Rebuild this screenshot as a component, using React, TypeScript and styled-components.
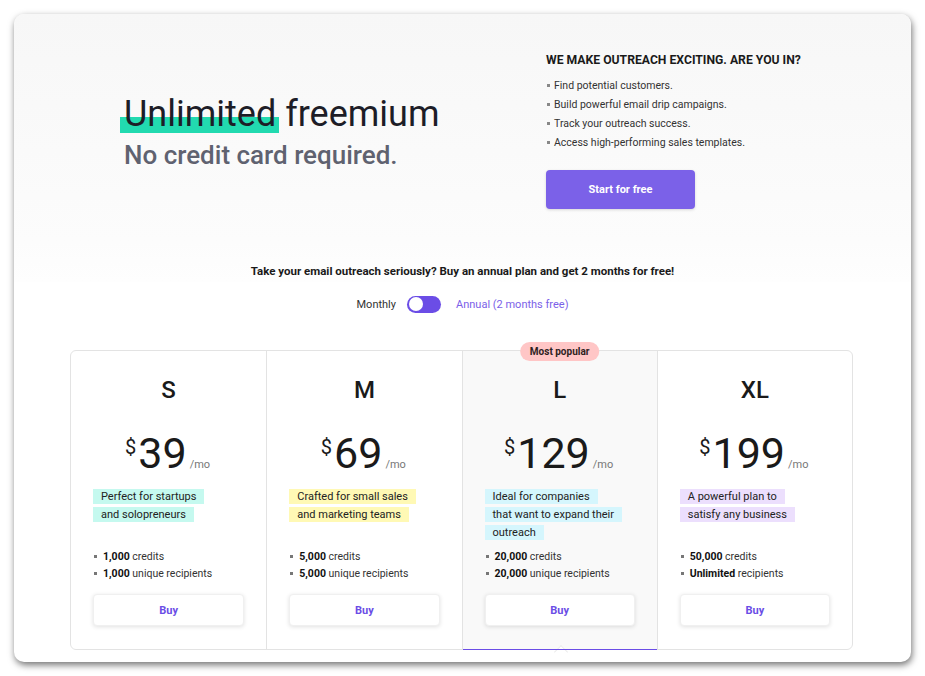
import { FC, useState } from "react";
import styled, { createGlobalStyle } from "styled-components";

const GlobalStyle = createGlobalStyle`
  html, body {
    margin: 0;
    padding: 0;
    background: #fff;
  }
  body {
    font-family: Roboto, "Liberation Sans", Arial, sans-serif;
    color: #222;
  }
  * {
    box-sizing: border-box;
  }
`;

const Page = styled.div`
  width: 925px;
  height: 676px;
  padding: 14px;
`;

const Window = styled.div`
  width: 897px;
  height: 648px;
  border-radius: 10px;
  background: #fff;
  box-shadow: 1px 3px 7px rgba(0, 0, 0, 0.55);
  overflow: hidden;
`;

const Hero = styled.section`
  background: linear-gradient(to bottom, #f7f7f7, #fcfcfc 85%, #fefefe);
  padding: 38px 0 3px;
`;

const HeroRow = styled.div`
  display: flex;
  align-items: center;
  padding-left: 110px;
`;

const HeroLeft = styled.div`
  width: 422px;
`;

const Headline = styled.h1`
  margin: 0;
  font-size: 36px;
  font-weight: 400;
  line-height: 42px;
  color: #1d1d27;
`;

const Marked = styled.span`
  padding: 0 3px 0 4px;
  margin: 0 -3px 0 -4px;
  background: linear-gradient(
    to bottom,
    transparent 58%,
    #22dab0 58%,
    #22dab0 96%,
    transparent 96%
  );
`;

const SubHeadline = styled.h2`
  margin: 6px 0 0;
  font-size: 26px;
  font-weight: 500;
  line-height: 28px;
  color: #5f6270;
`;

const HeroRight = styled.div`
  display: flex;
  flex-direction: column;
  align-items: flex-start;
`;

const Tagline = styled.h3`
  margin: 0;
  font-size: 12.2px;
  font-weight: 700;
  line-height: 16px;
  color: #1a1a1a;
`;

const PerkList = styled.ul`
  list-style: none;
  margin: 8px 0 0;
  padding: 0;
`;

const Perk = styled.li`
  position: relative;
  padding-left: 8px;
  font-size: 10.5px;
  line-height: 19px;
  color: #333;
  &::before {
    content: "";
    position: absolute;
    left: 1px;
    top: 8px;
    width: 3px;
    height: 3px;
    background: #888;
  }
`;

const StartButton = styled.button`
  margin-top: 18px;
  width: 149px;
  height: 39px;
  border: none;
  border-radius: 4px;
  background: #7b61e8;
  color: #fff;
  font-family: inherit;
  font-size: 11px;
  font-weight: 700;
  box-shadow: 0 1px 3px rgba(0, 0, 0, 0.15);
  cursor: pointer;
`;

const Announcement = styled.p`
  margin: 54px 0 0;
  text-align: center;
  font-size: 11.5px;
  font-weight: 700;
  line-height: 16px;
  color: #1a1a1a;
`;

const ToggleRow = styled.div`
  margin-top: 13px;
  display: flex;
  justify-content: center;
  align-items: center;
  height: 18px;
  font-size: 11px;
`;

const ToggleLabel = styled.span<{ $accent?: boolean }>`
  color: ${({ $accent }) => ($accent ? "#7b61e8" : "#333")};
`;

const Switch = styled.button<{ $on: boolean }>`
  position: relative;
  margin: 0 15px 0 11px;
  width: 34px;
  height: 17px;
  padding: 0;
  border: none;
  border-radius: 9px;
  background: #6b4de6;
  cursor: pointer;
  &::after {
    content: "";
    position: absolute;
    top: 1.5px;
    left: ${({ $on }) => ($on ? "1.5px" : "18.5px")};
    width: 14px;
    height: 14px;
    border-radius: 50%;
    background: #fff;
  }
`;

const PlanGrid = styled.div`
  margin: 37px 58px 0 56px;
  display: grid;
  grid-template-columns: repeat(4, 1fr);
  border: 1px solid #e3e3e3;
  border-radius: 6px;
`;

const PlanColumn = styled.div<{ $popular?: boolean }>`
  position: relative;
  display: flex;
  flex-direction: column;
  padding: 25px 22px 23px;
  background: ${({ $popular }) => ($popular ? "#f9f9f9" : "transparent")};
  & + & {
    border-left: 1px solid #e3e3e3;
  }
  ${({ $popular }) =>
    $popular &&
    `
    &::after {
      content: "";
      position: absolute;
      left: 0;
      right: 0;
      bottom: -1px;
      height: 1px;
      background: #6b4de6;
    }
    &::before {
      content: "";
      position: absolute;
      left: 50%;
      bottom: -8px;
      width: 9px;
      height: 9px;
      margin-left: -4px;
      transform: rotate(45deg);
      border-left: 1px solid #ececec;
      border-top: 1px solid #ececec;
      background: #fff;
    }
  `}
`;

const Badge = styled.span`
  position: absolute;
  top: -9px;
  left: 50%;
  transform: translateX(-50%);
  height: 19px;
  padding: 0 10px;
  border-radius: 10px;
  background: #ffc6c6;
  color: #2e2222;
  font-size: 10px;
  font-weight: 700;
  line-height: 19px;
  white-space: nowrap;
`;

const PlanName = styled.h4`
  margin: 0;
  text-align: center;
  font-size: 24px;
  font-weight: 500;
  line-height: 28px;
  color: #1a1a1a;
`;

const PriceRow = styled.div`
  margin-top: 28px;
  display: flex;
  justify-content: center;
  align-items: baseline;
  height: 42px;
`;

const Dollar = styled.span`
  align-self: flex-start;
  margin: 5px 2px 0 -2px;
  font-size: 20px;
  line-height: 20px;
  color: #1a1a1a;
`;

const Amount = styled.span`
  font-size: 43px;
  line-height: 42px;
  color: #1a1a1a;
`;

const Per = styled.span`
  margin-left: 3px;
  font-size: 11px;
  color: #777;
`;

const Description = styled.p`
  margin: 14px 0 6px;
  min-height: 54px;
  font-size: 11px;
  line-height: 18px;
  color: #222;
`;

const Highlight = styled.span<{ $tone: string }>`
  padding: 1px 8px;
  background: ${({ $tone }) => $tone};
  -webkit-box-decoration-break: clone;
  box-decoration-break: clone;
`;

const FeatureList = styled.ul`
  list-style: none;
  margin: 0;
  padding: 0;
`;

const Feature = styled.li`
  position: relative;
  padding-left: 10px;
  font-size: 10.5px;
  line-height: 17px;
  color: #333;
  b {
    font-weight: 700;
    color: #111;
  }
  &::before {
    content: "";
    position: absolute;
    left: 1px;
    top: 7px;
    width: 3px;
    height: 3px;
    background: #777;
  }
`;

const BuyButton = styled.button`
  margin-top: 12px;
  width: 100%;
  height: 32px;
  border: 1px solid #f0f0f0;
  border-radius: 4px;
  background: #fff;
  box-shadow: 0 1px 4px rgba(0, 0, 0, 0.12);
  color: #6a4de6;
  font-family: inherit;
  font-size: 11px;
  font-weight: 700;
  cursor: pointer;
`;

interface Plan {
  name: string;
  price: number;
  tone: string;
  lines: string[];
  credits: string;
  recipients: string;
  popular?: boolean;
}

const plans: Plan[] = [
  {
    name: "S",
    price: 39,
    tone: "#c5f9ef",
    lines: ["Perfect for startups", "and solopreneurs"],
    credits: "1,000",
    recipients: "1,000",
  },
  {
    name: "M",
    price: 69,
    tone: "#fff9b5",
    lines: ["Crafted for small sales", "and marketing teams"],
    credits: "5,000",
    recipients: "5,000",
  },
  {
    name: "L",
    price: 129,
    tone: "#d5f6fd",
    lines: ["Ideal for companies", "that want to expand their", "outreach"],
    credits: "20,000",
    recipients: "20,000",
    popular: true,
  },
  {
    name: "XL",
    price: 199,
    tone: "#ecdffd",
    lines: ["A powerful plan to", "satisfy any business"],
    credits: "50,000",
    recipients: "Unlimited",
  },
];

const perks = [
  "Find potential customers.",
  "Build powerful email drip campaigns.",
  "Track your outreach success.",
  "Access high-performing sales templates.",
];

const PlanCard: FC<{ plan: Plan }> = ({ plan }) => (
  <PlanColumn $popular={plan.popular}>
    {plan.popular && <Badge>Most popular</Badge>}
    <PlanName>{plan.name}</PlanName>
    <PriceRow>
      <Dollar>$</Dollar>
      <Amount>{plan.price}</Amount>
      <Per>/mo</Per>
    </PriceRow>
    <Description>
      {plan.lines.map((line, i) => (
        <span key={line}>
          <Highlight $tone={plan.tone}>{line}</Highlight>
          {i < plan.lines.length - 1 && <br />}
        </span>
      ))}
    </Description>
    <FeatureList>
      <Feature>
        <b>{plan.credits}</b> credits
      </Feature>
      <Feature>
        <b>{plan.recipients}</b>{" "}
        {plan.recipients === "Unlimited" ? "recipients" : "unique recipients"}
      </Feature>
    </FeatureList>
    <BuyButton>Buy</BuyButton>
  </PlanColumn>
);

export default function App() {
  const [monthly, setMonthly] = useState(true);

  return (
    <>
      <GlobalStyle />
      <Page>
        <Window>
          <Hero>
            <HeroRow>
              <HeroLeft>
                <Headline>
                  <Marked>Unlimited</Marked> freemium
                </Headline>
                <SubHeadline>No credit card required.</SubHeadline>
              </HeroLeft>
              <HeroRight>
                <Tagline>WE MAKE OUTREACH EXCITING. ARE YOU IN?</Tagline>
                <PerkList>
                  {perks.map((p) => (
                    <Perk key={p}>{p}</Perk>
                  ))}
                </PerkList>
                <StartButton>Start for free</StartButton>
              </HeroRight>
            </HeroRow>
            <Announcement>
              Take your email outreach seriously? Buy an annual plan and get 2
              months for free!
            </Announcement>
          </Hero>
          <ToggleRow>
            <ToggleLabel>Monthly</ToggleLabel>
            <Switch $on={monthly} onClick={() => setMonthly(!monthly)} />
            <ToggleLabel $accent>Annual (2 months free)</ToggleLabel>
          </ToggleRow>
          <PlanGrid>
            {plans.map((plan) => (
              <PlanCard key={plan.name} plan={plan} />
            ))}
          </PlanGrid>
        </Window>
      </Page>
    </>
  );
}
